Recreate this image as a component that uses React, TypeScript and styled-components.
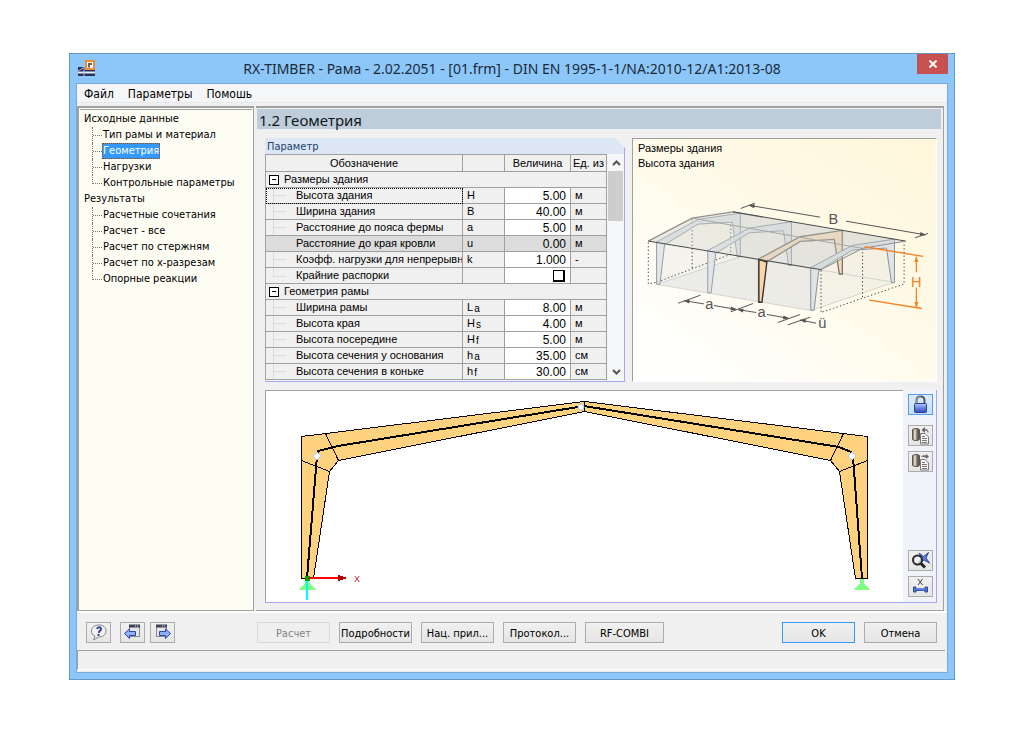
import React, { useState } from 'react';
import styled, { createGlobalStyle, css } from 'styled-components';

const tahoma = '"DejaVu Sans Condensed", "DejaVu Sans", sans-serif';
const segoe = '"Noto Sans", "Open Sans", sans-serif';
const sans = '"Liberation Sans", Arial, sans-serif';
const line = '#a0a0a0';
const violet = '#a6a6ee';

const Global = createGlobalStyle`
  * { box-sizing: border-box; }
  body { margin: 0; background: #fff; color: #000; font-family: ${tahoma}; font-size: 11px; }
  button, input { font: inherit; color: inherit; margin: 0; padding: 0; }
`;

const Desktop = styled.div`
  padding: 53px 69px;
`;

const Window = styled.div`
  background: #8dc7fa;
  border: 1px solid #6599c4;
  padding: 0 6px 6px;
`;

const TitleBar = styled.header`
  display: grid;
  grid-template-columns: 1fr auto 1fr;
  height: 29px;
`;

const AppMark = styled.svg`
  width: 18px;
  height: 18px;
  margin: 5px 0 0 2px;
`;

const Title = styled.h1`
  margin: 0;
  font: 400 14px/29px ${segoe};
  color: #1b2a38;
  white-space: nowrap;
`;

const CloseButton = styled.button`
  justify-self: end;
  display: grid;
  place-items: center;
  width: 31px;
  height: 20px;
  border: 0;
  background: #c75050;
`;

const Client = styled.div`
  background: #f0f0f0;
  border: 1px solid #7ba9d3;
  padding-bottom: 2px;
`;

const MenuBar = styled.nav`
  display: flex;
  gap: 14px;
  height: 19px;
  margin-bottom: 3px;
  padding-left: 7px;
  background: #f5f6f7;
  border-bottom: 1px solid #e8e8e8;
`;

const MenuItem = styled.button`
  border: 0;
  background: none;
  font-size: 12px;
  line-height: 20px;
`;

const Main = styled.div`
  display: flex;
  gap: 2px;
  padding-right: 3px;
  border-bottom: 2px solid #fff;
`;

const TreePane = styled.nav`
  flex: 0 0 177px;
  border: solid ${line};
  border-width: 2px 1px 1px 2px;
  background: #fdfdf3;
  padding: 1px 1px 0;
`;

const Tree = styled.ul`
  list-style: none;
  margin: 0;
  padding: 1px 0 0 4px;
  border-top: 1px solid ${line};
`;

const Branch = styled.ul`
  list-style: none;
  margin: 0;
  padding: 0 0 0 8px;
`;

const Group = styled.span`
  display: block;
  line-height: 16px;
`;

const Leaf = styled.li`
  display: flex;
  height: 16px;
`;

const Twig = styled.span<{ $last?: boolean }>`
  flex: 0 0 10px;
  border-left: 1px ${p => (p.$last ? 'none' : 'dotted')} #777;
  &::before {
    content: '';
    display: block;
    height: 8px;
    border-bottom: 1px dotted #777;
    border-left: 1px ${p => (p.$last ? 'dotted' : 'none')} #777;
  }
`;

const TreeLink = styled.a<{ $on?: boolean }>`
  border: 1px dotted transparent;
  line-height: 14px;
  color: #000;
  text-decoration: none;
  white-space: nowrap;
  ${p => p.$on && css`
    background: #3399ff;
    border-color: #a04800;
    color: #fff;
  `}
`;

const Page = styled.main`
  flex: 1;
  min-width: 0;
  border: solid ${line};
  border-width: 2px 1px 1px 0;
  padding: 1px 2px 7px 1px;
`;

const PageTitle = styled.h2`
  margin: 0 0 9px;
  padding-left: 2px;
  background: #bfccd9;
  font: 400 15px/23px ${segoe};
  height: 20px;
  color: #101820;
`;

const Panels = styled.div`
  display: grid;
  grid-template-columns: 360px 1fr;
  gap: 8px 7px;
  padding: 0 4px 0 8px;
`;

const ParamPanel = styled.section`
  display: flex;
  flex-direction: column;
`;

const ParamTitle = styled.h3`
  margin: 0;
  padding-left: 2px;
  height: 16px;
  font: 400 11px/17px ${tahoma};
  color: #1d3f6e;
  background: #dce6f4;
  border-right: 1px solid ${violet};
  clip-path: polygon(0 0, calc(100% - 10px) 0, 100% 10px, 100% 100%, 0 100%);
`;

const ParamBody = styled.div`
  display: flex;
  border: solid ${violet};
  border-width: 0 1px 1px 0;
  padding-bottom: 1px;
  background: #f5f6f8;
`;

const Grid = styled.table`
  width: 342px;
  table-layout: fixed;
  border-collapse: separate;
  border-spacing: 0;
  border: solid ${line};
  border-width: 1px 0 0 1px;
  background: #f0f0f0;
  font: 400 11px/13px ${sans};
`;

const cell = css`
  padding: 0;
  border: solid ${line};
  border-width: 0 1px 1px 0;
  font-weight: 400;
  text-align: left;
  white-space: nowrap;
  overflow: hidden;
`;

const HeadCell = styled.th`
  ${cell}
  height: 17px;
  text-align: center;
`;

const Cell = styled.td<{ $edit?: boolean; $pad?: number; $focus?: boolean }>`
  ${cell}
  height: 16px;
  padding-left: ${p => p.$pad ?? 0}px;
  background: ${p => (p.$edit ? '#fff' : 'transparent')};
  text-align: ${p => (p.$edit ? 'right' : 'left')};
  outline: ${p => (p.$focus ? '1px dotted #000' : 'none')};
  outline-offset: -1px;
`;

const Row = styled.tr<{ $off?: boolean }>`
  background: ${p => (p.$off ? '#dcdcdc' : 'transparent')};
`;

const GroupLine = styled.div`
  display: flex;
  align-items: center;
  gap: 5px;
  padding-left: 3px;
`;

const Toggle = styled.button`
  display: grid;
  place-items: center;
  width: 10px;
  height: 10px;
  border: 1px solid #000;
  background: #fff;
  &::before {
    content: '';
    width: 4px;
    height: 1px;
    background: #000;
  }
`;

const NameLine = styled.label<{ $last?: boolean; $bare?: boolean }>`
  display: flex;
  height: 15px;
  line-height: 15px;
  overflow: hidden;
  &::before {
    content: '';
    flex: 0 0 12px;
    margin: 0 10px 0 7px;
    height: ${p => (p.$last ? '8px' : '15px')};
    border-left: 1px solid #dcdcdc;
    background: ${p => (p.$last ? 'none' : 'linear-gradient(#dcdcdc, #dcdcdc) 0 7px / 100% 1px no-repeat')};
    border-bottom: ${p => (p.$last ? '1px solid #dcdcdc' : 'none')};
    visibility: ${p => (p.$bare ? 'hidden' : 'visible')};
  }
`;

const Symbol = styled.span`
  display: flex;
  align-items: flex-end;
  gap: 1px;
`;

const Sub = styled.span`
  font-size: 10px;
  line-height: 11px;
`;

const ValueInput = styled.input`
  display: block;
  width: 100%;
  height: 15px;
  padding: 0 4px 0 0;
  border: 0;
  background: none;
  font-size: 12px;
  text-align: right;
`;

const Tick = styled.input`
  appearance: none;
  display: block;
  width: 12px;
  height: 12px;
  margin: 1px 5px 0 auto;
  border: solid #000;
  border-width: 1px 2px 2px 1px;
  background: #fff;
`;

const Scroll = styled.div`
  flex: 1;
  display: flex;
  flex-direction: column;
  padding-left: 1px;
`;

const ScrollButton = styled.button`
  display: grid;
  place-items: center;
  height: 17px;
  border: 0;
  background: none;
`;

const Thumb = styled.div`
  height: 50px;
  background: #cdcdcd;
  margin-right: 1px;
`;

const Fill = styled.div`
  flex: 1;
`;

const Preview = styled.section`
  border: solid;
  border-width: 1px;
  border-color: ${line} #fff #fff ${line};
  background: linear-gradient(215deg, #fff6da, #fffae9 45%, #fffffd 90%);
  padding-top: 2px;
`;

const PreviewText = styled.p`
  margin: 0;
  padding-left: 5px;
  font: 400 11px/15px ${sans};
`;

const PreviewArt = styled.svg`
  display: block;
  width: 100%;
  height: 160px;
  margin-top: 14px;
  font-family: ${sans};
`;

const View = styled.section`
  grid-column: 1 / -1;
  display: flex;
  border: solid ${violet};
  border-width: 0 1px 1px 0;
  background: #f0f3f9;
`;

const Canvas = styled.div`
  flex: 1;
  min-width: 0;
  border: solid ${line};
  border-width: 1px 0 0 1px;
  background: #fff;
`;

const FrameArt = styled.svg`
  display: block;
  width: 100%;
  height: 211px;
`;

const Tools = styled.div`
  display: flex;
  flex-direction: column;
  gap: 5px;
  padding: 4px 3px 5px 5px;
`;

const Button = styled.button<{ $look?: 'primary' | 'on'; $w?: number }>`
  display: grid;
  place-items: center;
  width: ${p => p.$w ?? 73}px;
  height: 21px;
  border: 1px solid ${p => (p.$look === 'primary' ? '#3399ff' : p.$look === 'on' ? '#569de5' : '#acacac')};
  background: ${p => (p.$look === 'on' ? 'linear-gradient(#daecfc, #c4e0fc)' : 'linear-gradient(#f0f0f0, #e5e5e5)')};
  line-height: 21px;
  white-space: nowrap;
  &:disabled {
    border-color: #d9d9d9;
    background: #efefef;
    color: #838383;
  }
  svg { display: block; width: 19px; height: 19px; }
`;

const ToolGap = styled.div<{ $h?: number }>`
  flex: ${p => (p.$h === undefined ? '1' : `0 0 ${p.$h}px`)};
`;

const Footer = styled.footer`
  display: flex;
  align-items: center;
  justify-content: space-between;
  padding: 9px 10px 7px 9px;
`;

const Cluster = styled.div<{ $gap: number }>`
  display: flex;
  gap: ${p => p.$gap}px;
`;

const Left = styled.div`
  display: flex;
`;

const Nav = styled.div`
  display: flex;
  gap: 5px;
  width: 171px;
  & > :first-child { margin-right: 4px; }
`;

const Status = styled.div`
  height: 20px;
  margin-right: 2px;
  border: solid ${line};
  border-width: 1px 0 0 1px;
  border-bottom: 1px solid #fff;
`;

type Item = { name: string; sym: string; sub?: string; value?: string; unit: string; off?: boolean };

const building: Item[] = [
  { name: 'Высота здания', sym: 'H', value: '5.00', unit: 'м' },
  { name: 'Ширина здания', sym: 'B', value: '40.00', unit: 'м' },
  { name: 'Расстояние до пояса фермы', sym: 'a', value: '5.00', unit: 'м' },
  { name: 'Расстояние до края кровли', sym: 'u', value: '0.00', unit: 'м', off: true },
  { name: 'Коэфф. нагрузки для непрерывн', sym: 'k', value: '1.000', unit: '-' },
  { name: 'Крайние распорки', sym: '', unit: '' },
];

const frame: Item[] = [
  { name: 'Ширина рамы', sym: 'L', sub: 'a', value: '8.00', unit: 'м' },
  { name: 'Высота края', sym: 'H', sub: 's', value: '4.00', unit: 'м' },
  { name: 'Высота посередине', sym: 'H', sub: 'f', value: '5.00', unit: 'м' },
  { name: 'Высота сечения у основания', sym: 'h', sub: 'a', value: '35.00', unit: 'см' },
  { name: 'Высота сечения в коньке', sym: 'h', sub: 'f', value: '30.00', unit: 'см' },
];

const sections = [
  { title: 'Исходные данные', items: ['Тип рамы и материал', 'Геометрия', 'Нагрузки', 'Контрольные параметры'] },
  { title: 'Результаты', items: ['Расчетные сочетания', 'Расчет - все', 'Расчет по стержням', 'Расчет по x-разрезам', 'Опорные реакции'] },
];

function Field({ item, last, focus }: { item: Item; last?: boolean; focus?: boolean }) {
  const [value, setValue] = useState(item.value ?? '');
  const id = `f-${item.name.replace(/[^а-яёa-z]/gi, '')}`;
  return (
    <Row $off={item.off}>
      <Cell $focus={focus}><NameLine htmlFor={id} $last={last} $bare={item.off}>{item.name}</NameLine></Cell>
      <Cell $pad={4}><Symbol>{item.sym}{item.sub && <Sub>{item.sub}</Sub>}</Symbol></Cell>
      <Cell $edit={!item.off}>
        {item.value === undefined
          ? <Tick type="checkbox" id={id} />
          : <ValueInput id={id} value={value} disabled={item.off} onChange={e => setValue(e.target.value)} />}
      </Cell>
      <Cell $pad={4}>{item.unit}</Cell>
    </Row>
  );
}

function GroupRow({ title }: { title: string }) {
  return (
    <Row>
      <Cell colSpan={4}><GroupLine><Toggle aria-label={`Свернуть: ${title}`} />{title}</GroupLine></Cell>
    </Row>
  );
}

const Arrow = ({ x, y, a, c = '#555' }: { x: number; y: number; a: number; c?: string }) => (
  <path d="M0 0 L-19 -6 L-19 6 Z" fill={c} transform={`translate(${x} ${y}) rotate(${a})`} />
);

function BuildingArt() {
  const bay = 'M80 298 L80 170 L205 103 L332 84 L332 215 L323 215 L308 111 L205 117 L104 179 L90 298 Z';
  return (
    <PreviewArt viewBox="9 0 912 480" aria-label="Схема здания">
      <g fill="#d5d9da" fillOpacity=".25" stroke="none">
        <path d="M80 298 L545 377 L795 292 L332 215 Z" />
        <path d="M80 298 L80 172 L545 249 L545 377 Z" />
        <path d="M332 86 L795 162 L795 292 L332 215 Z" />
      </g>
      <g fill="none" stroke="#d4d4d0" strokeWidth="3">
        <path d="M80 298 L545 377 L795 292 L332 215 Z" />
      </g>
      <g fill="none" stroke="#444" strokeWidth="3" strokeDasharray="4 7">
        <path d="M55 172 V297 L80 292 L303 208 V112" />
        <path d="M187 102 V252" />
        <path d="M575 256 V383 L825 297 V170" />
        <path d="M700 190 V340" />
      </g>
      <g fill="#dfe4e8" fillOpacity=".85" stroke="#979da1" strokeWidth="3">
        <path d={bay} />
        <path d={bay} transform="translate(154 26)" />
      </g>
      <path d={bay} transform="translate(307 52)" fill="#fadfbb" stroke="#7d7468" strokeWidth="4" />
      <path d={bay} transform="translate(464 78)" fill="#dfe4e8" stroke="#8a9297" strokeWidth="3" />
      <path d="M55 168 L187 99 L310 80 L830 168 L700 190 L575 253 Z" fill="#c8cccc" fillOpacity=".36" stroke="none" />
      <path d="M388 352 V224 L412 231 L397 352 Z" fill="#fbd5a5" stroke="#333" strokeWidth="4" />
      <path d="M55 168 L187 99 L310 80 L400 96" fill="none" stroke="#909090" strokeWidth="4" />
      <path d="M187 99 L700 190" fill="none" stroke="#a6a6a6" strokeWidth="3" />
      <path d="M310 80 L830 168 M55 168 L575 254" fill="none" stroke="#4a4a4a" strokeWidth="3" />
      <path d="M575 254 L700 190 L830 168" fill="none" stroke="#909090" strokeWidth="3" />
      <g fill="none" stroke="#555" strokeWidth="3">
        <path d="M333 70 L375 54 M362 61 L572 96 M650 108 L888 149 M858 158 L897 145" />
        <path d="M145 355 L212 331 M166 348 L222 357 M252 362 L318 373 M303 381 L370 356" />
        <path d="M330 375 L380 383 M412 389 L476 400 M445 413 L512 389" />
        <path d="M475 420 L543 397 M514 406 L560 415" />
      </g>
      <Arrow x={356} y={60} a={190} />
      <Arrow x={892} y={150} a={10} />
      <Arrow x={160} y={347} a={190} />
      <Arrow x={322} y={374} a={10} />
      <Arrow x={322} y={374} a={190} />
      <Arrow x={480} y={401} a={10} />
      <Arrow x={510} y={405} a={190} />
      <g fill="none" stroke="#f58220" strokeWidth="4">
        <path d="M706 185 L882 214 M720 346 L879 371 M862 218 V262 M862 308 V364" />
      </g>
      <Arrow x={862} y={212} a={-90} c="#f58220" />
      <Arrow x={862} y={370} a={90} c="#f58220" />
      <g fill="#555" textAnchor="middle" fontSize="44">
        <text x="612" y="116">B</text>
        <text x="239" y="371">a</text>
        <text x="396" y="398">a</text>
        <text x="579" y="431">ü</text>
        <text x="862" y="305" fill="#f58220">H</text>
      </g>
    </PreviewArt>
  );
}

function FrameDrawing() {
  const half = (
    <>
      <path d="M35.500 45.500 L318.500 10.500 V20.500 L72.500 69.500 L63.500 80.500 L47.500 187.500 H35.500 Z" fill="#ffd280" stroke="#000" />
      <path d="M59.500 42.500 L72.500 69.500 M35.500 69.500 L63.500 80.500" fill="none" stroke="#000" />
    </>
  );
  return (
    <FrameArt viewBox="0 0 637 211" aria-label="Рама">
      <g shapeRendering="crispEdges">
        {half}
        <g transform="translate(637 0) scale(-1 1)">{half}</g>
        <path d="M41 187 L51 65 L52 60 L72 55 L318 15 L573 56 L585 61 L587 66 L596 187" fill="none" stroke="#000" strokeWidth="2" />
        <path d="M39 188 H43 V192 L50 199 H33 L39 192 Z M594 188 H598 V192 L604 199 H587 L594 192 Z" fill="#80ff80" />
        <path d="M41 188 V209" stroke="#00ffff" strokeWidth="2" />
        <path d="M39 185 H44 V190 H39 Z" fill="#00a000" />
        <path d="M43 187 H73" stroke="#ff0000" strokeWidth="2" />
        <path d="M72 184 L82 187 L72 190 Z" fill="#b00000" />
      </g>
      <path d="M51 61 L55 65 L51 69 L47 65 Z M586 61 L590 65 L586 69 L582 65 Z" fill="#fff" stroke="#a9c8f0" />
      <circle cx="315" cy="16" r="3" fill="#fff" stroke="#a9c8f0" />
      <text x="88" y="191" fontSize="9" fontFamily="Liberation Sans, sans-serif" fill="#c01818">X</text>
    </FrameArt>
  );
}

const LockIcon = () => (
  <svg viewBox="0 0 19 19">
    <defs>
      <linearGradient id="lock" x2="0" y2="1">
        <stop offset="0" stopColor="#b9c6f4" />
        <stop offset=".45" stopColor="#6f8ae4" />
        <stop offset="1" stopColor="#2c49bd" />
      </linearGradient>
    </defs>
    <path d="M5.500 9 V5.500 Q5.500 1.500 9.500 1.500 Q13.500 1.500 13.500 5.500 V9" fill="none" stroke="#565b63" strokeWidth="2" />
    <path d="M5.500 8 V5.500 Q5.500 1.500 9.500 1.500" fill="none" stroke="#9aa0a8" />
    <rect x="3.500" y="8.500" width="12" height="9" rx="1" fill="url(#lock)" stroke="#2a3f94" />
  </svg>
);

const CopyIcon = ({ out }: { out?: boolean }) => (
  <svg viewBox="0 0 19 19">
    <defs>
      <linearGradient id="drum">
        <stop offset="0" stopColor="#5b5047" />
        <stop offset=".35" stopColor="#f3eee8" />
        <stop offset=".6" stopColor="#8a7a6a" />
        <stop offset="1" stopColor="#4b4239" />
      </linearGradient>
    </defs>
    <path d="M1.500 4 Q1.500 2.500 5 2.500 Q8.500 2.500 8.500 4 V13 Q8.500 14.500 5 14.500 Q1.500 14.500 1.500 13 Z" fill="url(#drum)" stroke="#5d554c" />
    <path d={out ? 'M10 4.500 Q12 2.500 15 3.500 V2 L18 4.500 L15 7 V5.500' : 'M17 8 Q17 4 14 4.500 V7 L10.500 4 L14 1 V3 Q16.500 3 17.500 5'} fill="#666" />
    <path d="M9.500 7.500 H14 L17.500 11 V18 H9.500 Z" fill="#f6f6f6" stroke="#7a7a7a" />
    <path d="M11 10.500 H14 M11 12.500 H16 M11 14.500 H16 M11 16.500 H16" stroke="#777" />
  </svg>
);

const ZoomIcon = () => (
  <svg viewBox="0 0 19 19">
    <path d="M8 2 L12.500 5.500 L17.500 1.500 L15 7 L18.500 12 L13 9 L7 12.500 L11 7 Z" fill="#5f82de" stroke="#2a469c" />
    <circle cx="6.500" cy="9" r="4.500" fill="#eef2f8" fillOpacity=".75" stroke="#2b2b2b" strokeWidth="2" />
    <path d="M10 12.500 L14 16.500" stroke="#222" strokeWidth="3" />
  </svg>
);

const WidthIcon = () => (
  <svg viewBox="0 0 19 19">
    <path d="M7 2 L11.500 8 M11.500 2 L7 8" stroke="#444" />
    <path d="M5 12.500 H14" stroke="#3557b8" strokeWidth="3" />
    <path d="M2.500 10 H5 V15 H2.500 Z M14 10 H16.500 V15 H14 Z" fill="#5c7ed8" stroke="#2a469c" />
    <path d="M5 12 H14" stroke="#8eabf0" />
  </svg>
);

const HelpIcon = () => (
  <svg viewBox="0 0 19 19">
    <path d="M10 2 C14.500 2 17 4.500 17 8 C17 12 13.500 14 9.500 14 L4.500 17 L6 13 C3.500 12 2.500 10.500 2.500 8 C2.500 4.500 5.500 2 10 2 Z" fill="#f1f1f1" stroke="#858585" />
    <path d="M8 6 C8.500 3.500 12.500 3.800 12 6.300 C11.700 7.700 10 8 9.800 9.800 M9.500 11 V13" fill="none" stroke="#33489c" strokeWidth="2" />
  </svg>
);

const PageIcon = ({ next }: { next?: boolean }) => (
  <svg viewBox="0 0 19 19">
    <rect x={next ? 3.5 : 6.500} y="2.500" width="10" height="11" fill="#e6e6e8" stroke="#8a8a8c" />
    <path d={next ? 'M3 3 H14' : 'M6 3 H17'} stroke="#3c4252" strokeWidth="3" />
    <path d={next ? 'M9 3 H10 M11 3 H12' : 'M12 3 H13 M14 3 H15'} stroke="#e8e8ee" />
    <path d="M1.500 10.500 L6.500 6 V8.500 H12.500 V12.500 H6.500 V15.500 Z" fill="#8fb0fa" stroke="#2b479e"
      transform={next ? 'translate(19 0) scale(-1 1)' : undefined} />
  </svg>
);

export default function App() {
  const [page, setPage] = useState('Геометрия');
  return (
    <Desktop>
      <Global />
      <Window>
        <TitleBar>
          <AppMark viewBox="0 0 18 18">
            <path d="M0 8 H17 V17 H0 Z" fill="#27305e" />
            <path d="M0 13.500 H17" stroke="#e8edf4" strokeWidth="2" />
            <path d="M6 8 V17 M0 12 L6 8.500 L9 11" fill="none" stroke="#aab6cf" />
            <rect x="8" y="2" width="8" height="8" fill="#fff" stroke="#f08a3c" strokeWidth="2" />
            <path d="M11 8.500 V5 H14" fill="none" stroke="#7a6048" strokeWidth="2" />
          </AppMark>
          <Title>RX-TIMBER - Рама - 2.02.2051 - [01.frm] - DIN EN 1995-1-1/NA:2010-12/A1:2013-08</Title>
          <CloseButton aria-label="Закрыть">
            <svg width="8" height="8" viewBox="0 0 8 8"><path d="M.5 .5 L7.500 7.500 M7.500 .5 L.5 7.500" stroke="#fff" strokeWidth="2" /></svg>
          </CloseButton>
        </TitleBar>
        <Client>
          <MenuBar>
            {['Файл', 'Параметры', 'Помошь'].map(m => <MenuItem key={m}>{m}</MenuItem>)}
          </MenuBar>
          <Main>
            <TreePane>
              <Tree>
                {sections.map(s => (
                  <li key={s.title}>
                    <Group>{s.title}</Group>
                    <Branch>
                      {s.items.map((t, i) => (
                        <Leaf key={t}>
                          <Twig $last={i === s.items.length - 1} />
                          <TreeLink href="#" $on={t === page} onClick={() => setPage(t)}>{t}</TreeLink>
                        </Leaf>
                      ))}
                    </Branch>
                  </li>
                ))}
              </Tree>
            </TreePane>
            <Page>
              <PageTitle>1.2 Геометрия</PageTitle>
              <Panels>
                <ParamPanel>
                  <ParamTitle>Параметр</ParamTitle>
                  <ParamBody>
                    <Grid>
                      <colgroup>
                        <col style={{ width: 197 }} />
                        <col style={{ width: 42 }} />
                        <col style={{ width: 66 }} />
                        <col style={{ width: 36 }} />
                      </colgroup>
                      <thead>
                        <tr><HeadCell>Обозначение</HeadCell><HeadCell /><HeadCell>Величина</HeadCell><HeadCell>Ед. из</HeadCell></tr>
                      </thead>
                      <tbody>
                        <GroupRow title="Размеры здания" />
                        {building.map((b, i) => <Field key={b.name} item={b} focus={i === 0} last={i === building.length - 1} />)}
                        <GroupRow title="Геометрия рамы" />
                        {frame.map(f => <Field key={f.name} item={f} />)}
                      </tbody>
                    </Grid>
                    <Scroll>
                      <ScrollButton aria-label="Вверх">
                        <svg width="9" height="6" viewBox="0 0 9 6"><path d="M1 5 L4.500 1.500 L8 5" fill="none" stroke="#555" strokeWidth="2" /></svg>
                      </ScrollButton>
                      <Thumb />
                      <Fill />
                      <ScrollButton aria-label="Вниз">
                        <svg width="9" height="6" viewBox="0 0 9 6"><path d="M1 1 L4.500 4.500 L8 1" fill="none" stroke="#555" strokeWidth="2" /></svg>
                      </ScrollButton>
                    </Scroll>
                  </ParamBody>
                </ParamPanel>
                <Preview>
                  <PreviewText>Размеры здания</PreviewText>
                  <PreviewText>Высота здания</PreviewText>
                  <BuildingArt />
                </Preview>
                <View>
                  <Canvas><FrameDrawing /></Canvas>
                  <Tools>
                    <Button $w={25} $look="on" aria-label="Заблокировать"><LockIcon /></Button>
                    <ToolGap $h={0} />
                    <Button $w={25} aria-label="Загрузить"><CopyIcon /></Button>
                    <Button $w={25} aria-label="Сохранить"><CopyIcon out /></Button>
                    <ToolGap />
                    <Button $w={25} aria-label="Показать всё"><ZoomIcon /></Button>
                    <Button $w={25} aria-label="Размеры"><WidthIcon /></Button>
                  </Tools>
                </View>
              </Panels>
            </Page>
          </Main>
          <Footer>
            <Left>
              <Nav>
                <Button $w={25} aria-label="Справка"><HelpIcon /></Button>
                <Button $w={25} aria-label="Назад"><PageIcon /></Button>
                <Button $w={25} aria-label="Вперёд"><PageIcon next /></Button>
              </Nav>
              <Cluster $gap={9}>
                <Button disabled>Расчет</Button>
                <Button>Подробности</Button>
                <Button>Нац. прил...</Button>
                <Button>Протокол...</Button>
                <Button $w={79}>RF-COMBI</Button>
              </Cluster>
            </Left>
            <Cluster $gap={9}>
              <Button $look="primary">OK</Button>
              <Button>Отмена</Button>
            </Cluster>
          </Footer>
          <Status role="status" />
        </Client>
      </Window>
    </Desktop>
  );
}
